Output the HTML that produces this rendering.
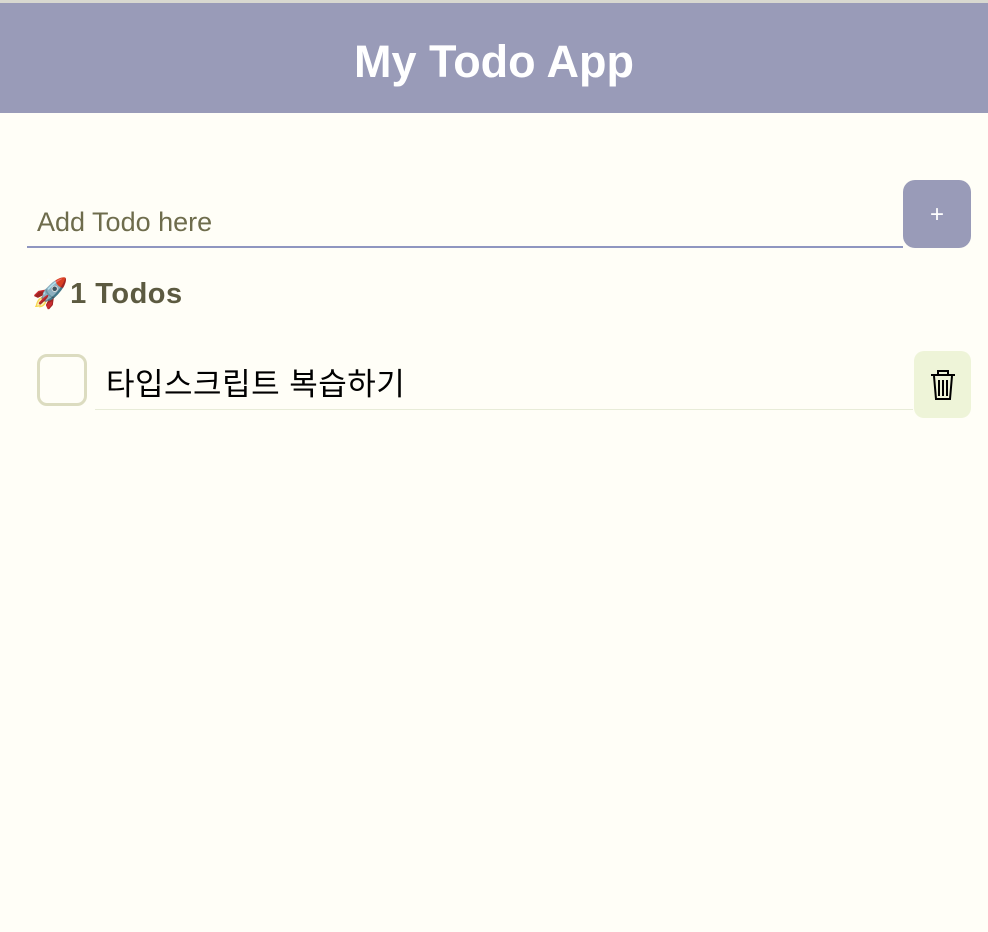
<!DOCTYPE html>
<html><head><meta charset="utf-8"><style>
body{margin:0;width:988px;height:932px;background:#fffef7;font-family:"Liberation Sans","Noto Sans CJK KR",sans-serif;position:relative;overflow:hidden}
.top{position:absolute;left:0;top:0;width:988px;height:3px;background:#d8d8d0}
.hdr{position:absolute;left:0;top:3px;width:988px;height:110px;background:#999bb8;color:#fff;font-weight:bold;font-size:45px;text-align:center;line-height:118px}
.inp{position:absolute;left:27px;top:200px;width:876px;height:48px;border-bottom:2px solid #8f96c0;color:#6e6c4c;font-size:27px;line-height:44px;box-sizing:border-box;padding-left:10px}
.add{position:absolute;left:903px;top:180px;width:68px;height:68px;border-radius:12px;background:#999bb8;color:#fff;font-size:24px;text-align:center;line-height:70px}
.cnt{position:absolute;left:32px;top:274px;font-size:29px;font-weight:bold;color:#5c5a40;line-height:40px}
.cnt b{letter-spacing:0.5px;margin-left:2px}
.cb{position:absolute;left:37px;top:354px;width:50px;height:52px;box-sizing:border-box;border:3px solid #dcdcc0;border-radius:10px}
.txt{position:absolute;left:95px;top:360px;width:818px;height:50px;border-bottom:1px solid #e8ecd8;font-size:31px;color:#000;padding-left:11px;line-height:50px;box-sizing:border-box;letter-spacing:0.5px}
.del{position:absolute;left:914px;top:351px;width:57px;height:67px;border-radius:10px;background:#eef4d8}
</style></head><body>
<div class="top"></div>
<div class="hdr">My Todo App</div>
<div class="inp">Add Todo here</div>
<div class="add">+</div>
<div class="cnt">🚀<b>1 Todos</b></div>
<div class="cb"></div>
<div class="txt">타입스크립트 복습하기</div>
<div class="del"><svg width="57" height="67" viewBox="0 0 57 67"><g fill="none" stroke="#000" stroke-width="2"><path d="M17 24h24M24 24v-4h10v4M20 25l2 23h14l2-23M25 29v16M29 29v16M33 29v16"/></g></svg></div>
</body></html>
